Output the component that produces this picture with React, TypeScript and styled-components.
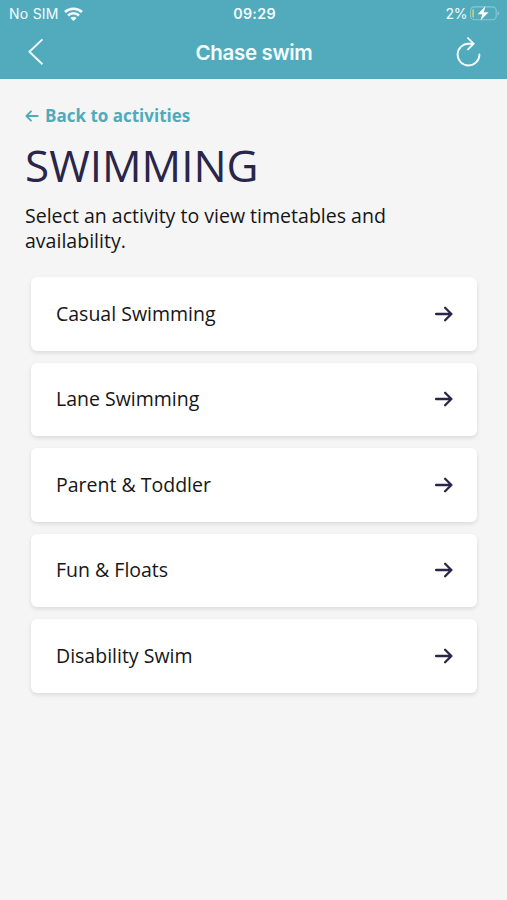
import React from 'react';
import styled, { createGlobalStyle } from 'styled-components';

const GlobalStyle = createGlobalStyle`
  * { box-sizing: border-box; }
  html, body { margin: 0; background: #f5f5f5; }
`;

const Screen = styled.div`
  width: 100%;
  min-height: 900px;
  background: #f5f5f5;
  color: #161616;
  font-family: 'Open Sans', 'Noto Sans', sans-serif;
`;

const Header = styled.header`
  height: 79px;
  background: #52abbd;
  color: #f2fdff;
  font-family: Inter, 'Liberation Sans', sans-serif;
`;

const StatusBar = styled.div`
  height: 27px;
  padding: 0 7px 0 9px;
  display: grid;
  grid-template-columns: 1fr auto 1fr;
  align-items: center;
  font-size: 14px;
  line-height: 28px;
`;

const StatusGroup = styled.div<{ $end?: boolean }>`
  display: flex;
  align-items: center;
  justify-content: ${(p) => (p.$end ? 'flex-end' : 'flex-start')};
  gap: ${(p) => (p.$end ? '3px' : '5px')};
  letter-spacing: ${(p) => (p.$end ? '-0.4px' : '0.25px')};
`;

const Clock = styled.span`
  font-weight: 600;
  font-size: 14.3px;
  letter-spacing: 0.3px;
`;

const NavBar = styled.nav`
  height: 52px;
  padding: 0 25px 0 26px;
  display: grid;
  grid-template-columns: 30px 1fr 30px;
  align-items: center;
`;

const NavButton = styled.button<{ $end?: boolean }>`
  border: 0;
  padding: 0 0 2px;
  background: none;
  color: inherit;
  height: 52px;
  display: flex;
  align-items: center;
  justify-content: ${(p) => (p.$end ? 'flex-end' : 'flex-start')};
`;

const Title = styled.div`
  text-align: center;
  font-weight: 600;
  font-size: 20.5px;
  line-height: 51px;
  height: 52px;
  letter-spacing: -0.35px;
`;

const Content = styled.main`
  padding: 24px 25px 0;
`;

const BackLink = styled.a`
  display: flex;
  align-items: center;
  gap: 6px;
  height: 25px;
  color: #4fabba;
  font-weight: 700;
  font-size: 17px;
  line-height: 25px;
`;

const Heading = styled.h1`
  margin: 8px 0 0;
  height: 58px;
  color: #29264a;
  font-weight: 400;
  font-size: 44px;
  line-height: 58px;
  white-space: nowrap;
`;

const Intro = styled.p`
  margin: 10px 0 0;
  max-width: 400px;
  font-size: 19.55px;
  line-height: 24.5px;
`;

const List = styled.div`
  margin: 24px 5px 0 6px;
  display: grid;
  gap: 12px;
`;

const Card = styled.button`
  width: 100%;
  height: 73.5px;
  padding: 0 24px 0 25px;
  border: 0;
  border-radius: 6px;
  background: #fff;
  box-shadow: 0 2px 4px rgba(0, 0, 0, 0.11);
  display: flex;
  align-items: center;
  justify-content: space-between;
  color: #161616;
  font: 400 19.5px/26px 'Open Sans', 'Noto Sans', sans-serif;
`;

const ACTIVITIES = ['Casual Swimming', 'Lane Swimming', 'Parent & Toddler', 'Fun & Floats', 'Disability Swim'];

const Wifi = () => (
  <svg width="19" height="14" viewBox="0 0 19 14" fill="none" stroke="currentColor" strokeWidth="2.7">
    <path d="M1 5.1C5.7.6 13.3.6 18 5.1M4 8.4C7.1 5.5 11.9 5.5 15 8.4" />
    <path d="M6.4 10.9C8.2 9.3 10.8 9.3 12.6 10.9L9.5 14Z" fill="currentColor" stroke="none" />
  </svg>
);

const Battery = () => (
  <svg width="30" height="16" viewBox="0 0 30 16">
    <rect x=".6" y=".9" width="25.6" height="12.8" rx="3.8" fill="none" stroke="#8bc8d5" strokeWidth="1.1" />
    <path d="M4 2.9V11.7C2.6 11.7 2.2 10.9 2.2 9.7V4.9C2.2 3.7 2.6 2.9 4 2.9Z" fill="#c8cf62" />
    <path d="M27.6 5C29.7 5.8 29.7 8.8 27.6 9.6Z" fill="#8bc8d5" />
    <path d="M15.4 .3L7.6 8.3H12.2L10.6 14.3L18.6 6.2H13.8Z" fill="#fff" />
  </svg>
);

const Chevron = () => (
  <svg width="20" height="28" viewBox="0 0 20 28" fill="none" stroke="currentColor" strokeWidth="1.9">
    <path d="M16.4 1.4L3.4 13.8L16.4 26.2" />
  </svg>
);

const Refresh = () => (
  <svg width="26" height="30" viewBox="0 0 26 30" fill="none" stroke="currentColor" strokeWidth="1.9">
    <path d="M23.4 17.4A10.9 10.9 0 1 1 12.6 6.7H17.2M12 1.1L17.6 6.7L12 12.4" strokeLinecap="round" />
  </svg>
);

const ArrowLeft = () => (
  <svg width="14" height="12" viewBox="0 0 14 12" fill="none" stroke="currentColor" strokeWidth="1.8" strokeLinecap="round" strokeLinejoin="round">
    <path d="M12.8 6H1.4M6 1.3L1.4 6L6 10.7" />
  </svg>
);

const ArrowRight = () => (
  <svg width="18" height="16" viewBox="0 0 18 16" fill="none" stroke="#29264a" strokeWidth="2.3" strokeLinecap="round" strokeLinejoin="round">
    <path d="M1.1 8H16.3M10.1 1.7L16.4 8L10.1 14.3" />
  </svg>
);

export default function App() {
  return (
    <Screen>
      <GlobalStyle />
      <Header>
        <StatusBar>
          <StatusGroup>
            <span>No SIM</span>
            <Wifi />
          </StatusGroup>
          <Clock>09:29</Clock>
          <StatusGroup $end>
            <span>2%</span>
            <Battery />
          </StatusGroup>
        </StatusBar>
        <NavBar>
          <NavButton aria-label="Back"><Chevron /></NavButton>
          <Title>Chase swim</Title>
          <NavButton $end aria-label="Reload"><Refresh /></NavButton>
        </NavBar>
      </Header>
      <Content>
        <BackLink><ArrowLeft />Back to activities</BackLink>
        <Heading>SWIMMING</Heading>
        <Intro>Select an activity to view timetables and availability.</Intro>
        <List>
          {ACTIVITIES.map((name) => (
            <Card key={name}>
              <span>{name}</span>
              <ArrowRight />
            </Card>
          ))}
        </List>
      </Content>
    </Screen>
  );
}
